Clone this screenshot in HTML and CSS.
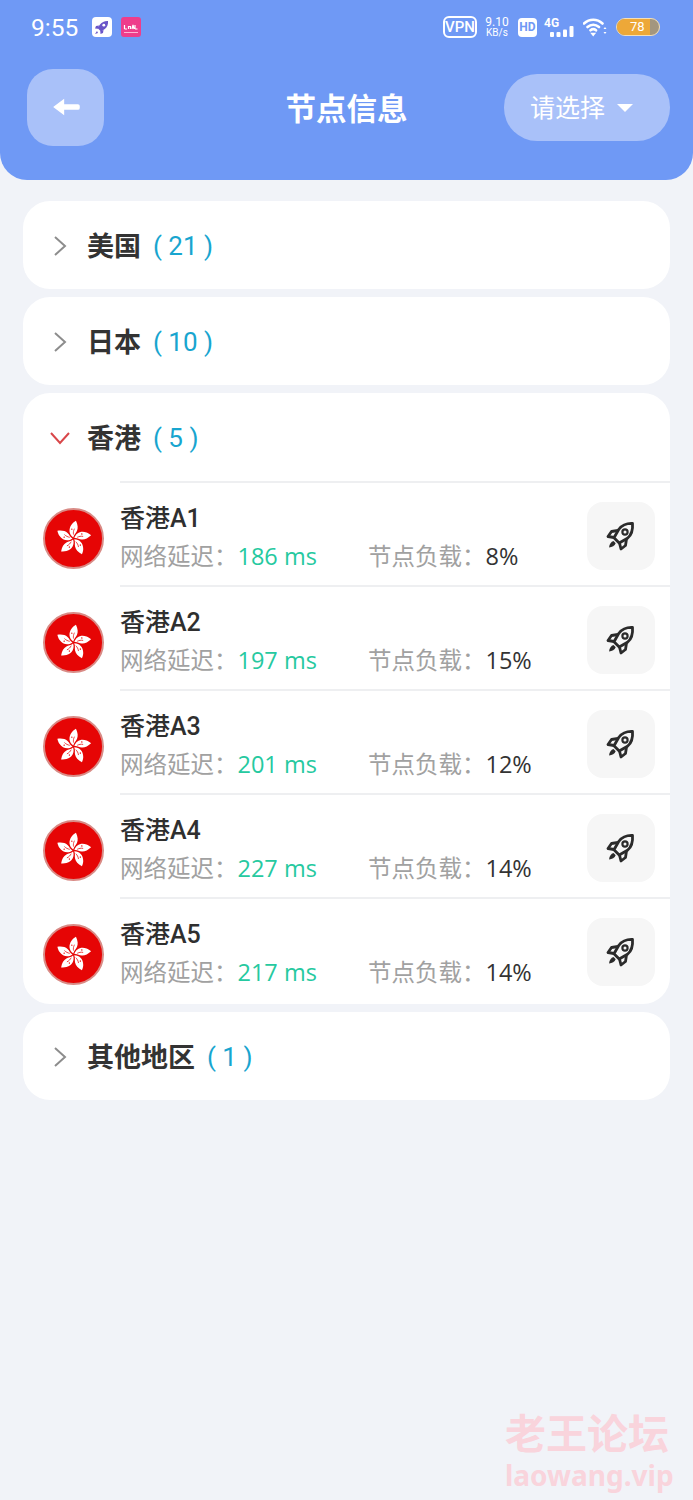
FILE: index.html
```html
<!DOCTYPE html>
<html lang="zh-CN">
<head>
    <meta charset="UTF-8">
    <meta name="viewport" content="width=device-width, initial-scale=1.0">
    <title>节点信息</title>
    <link rel="stylesheet" href="styles.css">
</head>
<body>
    <svg class="defs" width="0" height="0">
        <symbol id="rocket" viewBox="0 0 32 32">
            <path d="M27.5 3.5c-6-.3-10.500 1.800-13.800 6l-4.700 8.300 5.200 5.200 8.300-4.700c3.900-3.300 5.500-8.700 5-14.800z" fill="none" stroke="#2b2b2b" stroke-width="2.800" stroke-linejoin="round"/>
            <path d="M13 10.500l-6.500 1-3.500 5 6 1M21.500 19l-1 6.500-4.500 3.500-1.500-6" fill="none" stroke="#2b2b2b" stroke-width="2.800" stroke-linejoin="round"/>
            <circle cx="20" cy="12" r="2.600" fill="none" stroke="#2b2b2b" stroke-width="2.200"/>
            <path d="M8.500 21c-2.500.7-4 3-4.500 6.500 3.200-.4 5.700-1.800 6.700-4.300z" fill="#2b2b2b"/>
        </symbol>
        <symbol id="flag" viewBox="0 0 62 62">
            <circle cx="31" cy="31" r="30" fill="#e60505" stroke="#d98b86" stroke-width="2"/>
            <g id="petal">
                <path d="M30.800 30c-4.300-3-5.300-8.500-1.500-13.500 1-1.300 2.700-2.800 4.200-3.500 2 4.300 2.300 7.500 1 10.500-1 2.400-3 3.300-3.700 6.500z" fill="#fff"/>
                <path d="M31 27c-.3-2-.1-4 1-6" fill="none" stroke="#e60505" stroke-width=".7"/>
                <circle cx="29.300" cy="21.500" r=".7" fill="#e60505"/>
            </g>
            <use href="#petal" transform="rotate(72 31 31)"/>
            <use href="#petal" transform="rotate(144 31 31)"/>
            <use href="#petal" transform="rotate(216 31 31)"/>
            <use href="#petal" transform="rotate(288 31 31)"/>
        </symbol>
    </svg>

    <header class="top">
        <div class="status">
            <span class="clock">9:55</span>
            <svg class="app-icon" viewBox="0 0 20 20">
                <rect width="20" height="20" rx="4" fill="#fff"/>
                <path d="M16 4c-3.500-.2-6 1-8 3.500L5.500 11l3.500 3.500 3.800-2.500C15.300 10 16.300 7.500 16 4z" fill="#6a55c8"/>
                <path d="M7 8.500l-3 .5-1 2.500 3 .2M11.500 13l-.5 3-2.500 1-.2-3M5 14l-2 3 3-1z" fill="#6a55c8"/>
                <circle cx="11.800" cy="8.200" r="1.400" fill="#fff"/>
            </svg>
            <svg class="app-icon app-icon-second" viewBox="0 0 20 20">
                <rect width="20" height="20" rx="3" fill="#ee3d8b"/>
                <path d="M3.500 12V8M3.500 12h2.500M7.500 12V9.500h2V12M11 12l1-4 1 4M14 12V8M14 12h2.500" fill="none" stroke="#fff" stroke-width="1.200"/>
                <rect x="3" y="15" width="14" height="1" fill="#ffb3d3"/>
            </svg>
            <span class="status-right">
                <span class="vpn">VPN</span>
                <span class="speed">9.10<small>KB/s</small></span>
                <span class="hd">HD</span>
                <span class="signal">
                    <span class="signal-label">4G</span>
                    <svg width="24" height="11" viewBox="0 0 24 11">
                        <rect x="0" y="6" width="4" height="5" rx="1" fill="#fff"/>
                        <rect x="6.500" y="6" width="4" height="5" rx="1" fill="#fff"/>
                        <rect x="13" y="3.500" width="4" height="7.500" rx="1" fill="#fff"/>
                        <rect x="19.500" y="0" width="4" height="11" rx="1" fill="#fff"/>
                    </svg>
                </span>
                <svg class="wifi" width="24" height="20" viewBox="0 0 24 20">
                    <path d="M1 6.500c5.500-5 13-5 18.500 0M4.500 10c3.500-3 8-3 11.500 0M7.500 13.300c1.800-1.400 3.800-1.400 5.500 0" fill="none" stroke="#fff" stroke-width="2.600" stroke-linecap="round"/>
                    <path d="M10.200 19.500l-3-3.700h6z" fill="#fff"/>
                    <path d="M20.500 12l1.500-2 1.500 2zM20.500 15l1.500 2 1.500-2z" fill="#fff"/>
                </svg>
                <span class="battery"><span class="battery-level">78</span></span>
            </span>
        </div>
        <div class="toolbar">
            <button class="back" type="button">
                <svg width="28" height="22" viewBox="0 0 30 24"><path d="M1 12L13 3v6h15a2 2 0 0 1 2 2v2a2 2 0 0 1-2 2H13v6z" fill="#fff"/></svg>
            </button>
            <h1 class="title">节点信息</h1>
            <button class="picker" type="button">请选择<span class="caret"></span></button>
        </div>
    </header>

    <main class="list">
        <section class="group">
            <div class="group-head">
                <svg class="chev" width="14" height="22" viewBox="0 0 14 22"><path d="M2 2l10 9-10 9" fill="none" stroke="#8d8d8d" stroke-width="2"/></svg>
                <span class="group-name">美国</span><span class="group-count">( 21 )</span>
            </div>
        </section>
        <section class="group">
            <div class="group-head">
                <svg class="chev" width="14" height="22" viewBox="0 0 14 22"><path d="M2 2l10 9-10 9" fill="none" stroke="#8d8d8d" stroke-width="2"/></svg>
                <span class="group-name">日本</span><span class="group-count">( 10 )</span>
            </div>
        </section>
        <section class="group group-open">
            <div class="group-head">
                <svg class="chev chev-open" width="22" height="14" viewBox="0 0 22 14"><path d="M2 2l9 10 9-10" fill="none" stroke="#d9474a" stroke-width="2"/></svg>
                <span class="group-name">香港</span><span class="group-count">( 5 )</span>
            </div>

            <div class="node">
                <svg class="flag"><use href="#flag"/></svg>
                <div class="node-body">
                    <div class="node-info">
                        <div class="node-name">香港A1</div>
                        <div class="node-stats">
                            <span class="stat-delay">网络延迟：<em>186 ms</em></span>
                            <span class="stat-load">节点负载：<b>8%</b></span>
                        </div>
                    </div>
                    <div class="speed-btn"><svg width="32" height="32"><use href="#rocket"/></svg></div>
                </div>
            </div>
            <div class="node">
                <svg class="flag"><use href="#flag"/></svg>
                <div class="node-body">
                    <div class="node-info">
                        <div class="node-name">香港A2</div>
                        <div class="node-stats">
                            <span class="stat-delay">网络延迟：<em>197 ms</em></span>
                            <span class="stat-load">节点负载：<b>15%</b></span>
                        </div>
                    </div>
                    <div class="speed-btn"><svg width="32" height="32"><use href="#rocket"/></svg></div>
                </div>
            </div>
            <div class="node">
                <svg class="flag"><use href="#flag"/></svg>
                <div class="node-body">
                    <div class="node-info">
                        <div class="node-name">香港A3</div>
                        <div class="node-stats">
                            <span class="stat-delay">网络延迟：<em>201 ms</em></span>
                            <span class="stat-load">节点负载：<b>12%</b></span>
                        </div>
                    </div>
                    <div class="speed-btn"><svg width="32" height="32"><use href="#rocket"/></svg></div>
                </div>
            </div>
            <div class="node">
                <svg class="flag"><use href="#flag"/></svg>
                <div class="node-body">
                    <div class="node-info">
                        <div class="node-name">香港A4</div>
                        <div class="node-stats">
                            <span class="stat-delay">网络延迟：<em>227 ms</em></span>
                            <span class="stat-load">节点负载：<b>14%</b></span>
                        </div>
                    </div>
                    <div class="speed-btn"><svg width="32" height="32"><use href="#rocket"/></svg></div>
                </div>
            </div>
            <div class="node">
                <svg class="flag"><use href="#flag"/></svg>
                <div class="node-body">
                    <div class="node-info">
                        <div class="node-name">香港A5</div>
                        <div class="node-stats">
                            <span class="stat-delay">网络延迟：<em>217 ms</em></span>
                            <span class="stat-load">节点负载：<b>14%</b></span>
                        </div>
                    </div>
                    <div class="speed-btn"><svg width="32" height="32"><use href="#rocket"/></svg></div>
                </div>
            </div>
        </section>
        <section class="group">
            <div class="group-head">
                <svg class="chev" width="14" height="22" viewBox="0 0 14 22"><path d="M2 2l10 9-10 9" fill="none" stroke="#8d8d8d" stroke-width="2"/></svg>
                <span class="group-name">其他地区</span><span class="group-count">( 1 )</span>
            </div>
        </section>
    </main>

    <div class="watermark">
        <div class="watermark-cn">老王论坛</div>
        <div class="watermark-en">laowang.vip</div>
    </div>
</body>
</html>
```

FILE: styles.css
```css
* {
    box-sizing: border-box;
}
html, body {
    margin: 0;
    padding: 0;
}
body {
    position: relative;
    height: 1500px;
    overflow: hidden;
    background-color: #f1f3f8;
    font-family: Roboto, "Noto Sans CJK SC", sans-serif;
    color: #333;
}
.defs {
    position: absolute;
}

/* header */
.top {
    height: 180px;
    background-color: #6f99f5;
    border-radius: 0 0 27px 27px;
    color: #fff;
}
.status {
    display: flex;
    align-items: center;
    height: 54px;
    padding: 0 33px 0 31px;
}
.clock {
    font-size: 24.500px;
    width: 61px;
}
.app-icon {
    width: 20px;
    height: 20px;
}
.app-icon-second {
    margin-left: 9px;
}
.status-right {
    display: flex;
    align-items: center;
    margin-left: auto;
}
.vpn {
    width: 34px;
    height: 22px;
    border: 2px solid #fff;
    border-radius: 6px;
    font-size: 15px;
    font-weight: 500;
    line-height: 18px;
    text-align: center;
}
.speed {
    display: flex;
    flex-direction: column;
    align-items: center;
    width: 24px;
    margin-left: 8px;
    font-size: 12px;
    line-height: 11px;
}
.speed small {
    font-size: 10px;
    line-height: 10px;
}
.hd {
    width: 19px;
    height: 19px;
    margin-left: 9px;
    background-color: #fff;
    border-radius: 4px;
    color: #6f99f5;
    font-size: 12px;
    font-weight: 700;
    line-height: 19px;
    text-align: center;
}
.signal {
    display: flex;
    flex-direction: column;
    width: 30px;
    margin-left: 7px;
    align-items: flex-end;
}
.signal-label {
    align-self: flex-start;
    font-size: 12px;
    font-weight: 700;
    line-height: 11px;
    height: 8px;
}
.wifi {
    margin-left: 9px;
}
.battery {
    width: 44px;
    height: 18px;
    margin-left: 9px;
    border: 1.500px solid #f3dfb8;
    border-radius: 9px;
    background-color: #a3967f;
    overflow: hidden;
}
.battery-level {
    display: block;
    width: 78%;
    height: 100%;
    background-color: #eda838;
    font-size: 13px;
    line-height: 15px;
    text-align: center;
    padding-left: 8px;
}
.toolbar {
    display: grid;
    grid-template-columns: 1fr auto 1fr;
    align-items: center;
    height: 92px;
    padding: 0 23px;
    margin-top: 7px;
}
.back {
    width: 77px;
    height: 77px;
    margin-left: 4px;
    padding: 0;
    border: none;
    border-radius: 26px;
    background-color: #a9c1f9;
    display: flex;
    align-items: center;
    justify-content: center;
}
.title {
    margin: 0;
    font-size: 30.500px;
    font-weight: 700;
}
.picker {
    justify-self: end;
    display: flex;
    align-items: center;
    width: 166px;
    height: 67px;
    padding: 0 0 2px 26px;
    border: none;
    border-radius: 33px;
    background-color: #a9c1f9;
    color: #fff;
    font-family: inherit;
    font-size: 25px;
}
.caret {
    width: 0;
    height: 0;
    margin-left: 12px;
    margin-top: 3px;
    border-left: 8px solid transparent;
    border-right: 8px solid transparent;
    border-top: 8px solid #fff;
}

/* groups */
.list {
    display: flex;
    flex-direction: column;
    gap: 8px;
    padding: 21px 23px 0;
}
.group {
    background-color: #fff;
    border-radius: 27px;
    overflow: hidden;
}
.group-open {
    padding-bottom: 3px;
}
.group-head {
    display: flex;
    align-items: center;
    height: 88px;
    padding-left: 30px;
    padding-bottom: 2px;
}
.chev {
    width: 14px;
    margin-top: 4px;
    margin-right: 20px;
}
.chev-open {
    width: 22px;
    margin-left: -4px;
    margin-right: 16px;
}
.group-name {
    font-size: 27px;
    font-weight: 700;
}
.group-count {
    margin-left: 12px;
    margin-top: 4px;
    color: #18a5cf;
    font-size: 26px;
}

/* node rows */
.node {
    display: flex;
    align-items: center;
    padding-left: 20px;
}
.flag {
    width: 61px;
    height: 61px;
    margin-top: 11px;
    margin-right: 16px;
    flex-shrink: 0;
}
.node-body {
    display: flex;
    align-items: center;
    flex: 1;
    height: 104px;
    padding-right: 15px;
    border-top: 2px solid #eeeff1;
}
.node-info {
    flex: 1;
    padding-top: 6px;
}
.node-name {
    font-size: 25px;
    font-weight: 500;
    line-height: 34px;
    color: #2f2f2f;
}
.node-stats {
    display: flex;
    margin-top: 3px;
    font-family: "Open Sans", "Noto Sans CJK SC", sans-serif;
    font-size: 23.500px;
    line-height: 34px;
    color: #a1a1a1;
}
.stat-delay {
    width: 248px;
}
.stat-delay em {
    font-style: normal;
    color: #26c9a0;
}
.stat-load b {
    font-weight: 400;
    color: #333;
}
.speed-btn {
    display: flex;
    align-items: center;
    justify-content: center;
    width: 68px;
    height: 68px;
    margin-top: 4px;
    border-radius: 16px;
    background-color: #f6f6f6;
}

/* watermark */
.watermark {
    position: absolute;
    left: 505px;
    top: 1412px;
    color: #f9d4dc;
    font-weight: 700;
    white-space: nowrap;
}
.watermark-cn {
    font-size: 41px;
    line-height: 46px;
}
.watermark-en {
    font-family: "Noto Sans", sans-serif;
    font-size: 28px;
    line-height: 34px;
}
```
